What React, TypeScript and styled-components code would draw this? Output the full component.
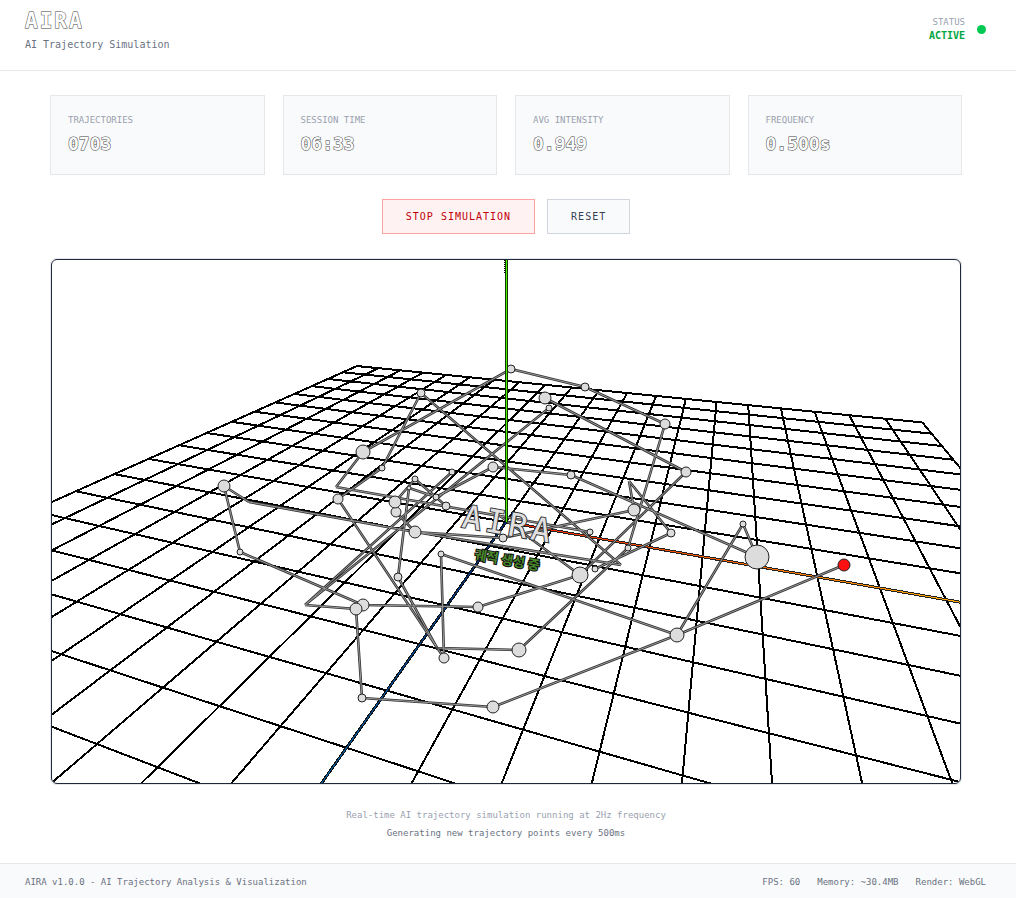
import React, { useState } from 'react';
import styled, { createGlobalStyle } from 'styled-components';

const mono = '"DejaVu Sans Mono", "Liberation Mono", monospace';

const GlobalStyle = createGlobalStyle`
  * { box-sizing: border-box; }
  body { margin: 0; background: #fff; font-family: ${mono}; font-size: 9px; }
  h1, p, dl, dt, dd { margin: 0; }
`;

const Page = styled.div`
  min-height: 100vh;
  display: flex;
  flex-direction: column;
`;

const Header = styled.header`
  display: flex;
  justify-content: space-between;
  align-items: flex-start;
  height: 71px;
  padding: 9px 30px 0 25px;
  border-bottom: 1px solid #e5e7eb;
`;

const Title = styled.h1`
  font-size: 21px;
  line-height: 24px;
  font-weight: 700;
  letter-spacing: 2px;
  color: #fff;
  -webkit-text-stroke: 1px #444;
  paint-order: stroke fill;
`;

const Subtitle = styled.p`
  margin-top: 5px;
  font-size: 10px;
  line-height: 14px;
  color: #6a7282;
`;

const Status = styled.div`
  display: flex;
  align-items: center;
  gap: 12px;
  margin-top: 7px;
`;

const StatusText = styled.div`
  text-align: right;
  line-height: 13px;
  color: #99a1af;
`;

const StatusValue = styled.div`
  font-size: 10px;
  line-height: 14px;
  font-weight: 700;
  color: #00a63e;
`;

const Dot = styled.span`
  width: 9px;
  height: 9px;
  border-radius: 50%;
  background: #00c951;
`;

const Main = styled.main`
  flex: 1;
  display: flex;
  flex-direction: column;
  gap: 24px;
  padding: 24px 54px 23px 50px;
`;

const Stats = styled.dl`
  display: grid;
  grid-template-columns: repeat(4, 1fr);
  gap: 18px;
`;

const Card = styled.div`
  height: 80px;
  padding: 18px 17px;
  background: #f9fafb;
  border: 1px solid #e5e7eb;
`;

const CardLabel = styled.dt`
  line-height: 13px;
  color: #99a1af;
`;

const CardValue = styled.dd`
  margin-top: 4px;
  font-size: 18px;
  line-height: 26px;
  font-weight: 700;
  color: #f9fafb;
  -webkit-text-stroke: 1px #444;
  paint-order: stroke fill;
`;

const Controls = styled.div`
  display: flex;
  justify-content: center;
  gap: 12px;
`;

const Button = styled.button<{ $danger?: boolean }>`
  height: 35px;
  padding: 0 23px;
  font: 400 10px ${mono};
  letter-spacing: 1px;
  cursor: pointer;
  color: ${(p) => (p.$danger ? '#c10007' : '#364153')};
  background: ${(p) => (p.$danger ? '#fef2f2' : '#f9fafb')};
  border: 1px solid ${(p) => (p.$danger ? '#ffa2a2' : '#d1d5dc')};
`;

const Viewport = styled.div`
  border: 1px solid #e5e7eb;
  border-radius: 6px;
`;

const Scene = styled.svg`
  display: block;
  width: 100%;
  height: 525px;
  border: 1px solid #1e2939;
  border-radius: 6px;
`;

const SceneTitle = styled.text`
  font: 400 32px ${mono};
  letter-spacing: 4px;
  fill: #e0e0e0;
  stroke: #333;
  stroke-width: 2px;
  paint-order: stroke;
`;

const SceneCaption = styled.text`
  font: 700 13px "Noto Sans CJK KR", sans-serif;
  fill: #4a8a2c;
  stroke: #111;
  stroke-width: 2px;
  paint-order: stroke;
`;

const Notes = styled.div`
  text-align: center;
  line-height: 13px;
  color: #99a1af;
`;

const Detail = styled.p`
  margin-top: 5px;
  color: #6a7282;
`;

const Footer = styled.footer`
  display: flex;
  justify-content: space-between;
  align-items: center;
  height: 35px;
  padding: 2px 30px 0 25px;
  background: #f9fafb;
  border-top: 1px solid #e5e7eb;
  color: #6a7282;
`;

const Metrics = styled.div`
  display: flex;
  gap: 17px;
`;

// Orbit camera: focal length in px, distance in grid cells, azimuth and elevation.
const FOCAL = 562;
const DISTANCE = 11.94;
const AZIMUTH = (19.45 * Math.PI) / 180;
const ELEVATION = Math.PI / 6;

type Point = [number, number];

// Projects a point of the ground plane; the canvas centre is the world origin.
function project(x: number, z: number): Point {
  const across = x * Math.cos(AZIMUTH) - z * Math.sin(AZIMUTH);
  const toward = x * Math.sin(AZIMUTH) + z * Math.cos(AZIMUTH);
  const depth = DISTANCE - toward * Math.cos(ELEVATION);
  return [(FOCAL * across) / depth, (FOCAL * toward * Math.sin(ELEVATION)) / depth];
}

const CELLS = Array.from({ length: 21 }, (_, i) => i - 10);

const segment = (a: Point, b: Point) => `M${a[0]} ${a[1]}L${b[0]} ${b[1]}`;

const gridPath = CELLS.filter((n) => n !== 0)
  .map((n) => segment(project(n, -10), project(n, 10)) + segment(project(-10, n), project(10, n)))
  .join('') +
  segment(project(0, -10), project(0, 0)) +
  segment(project(-10, 0), project(0, 0));

const X_END = project(10, 0);
const Z_END = project(0, 8);

// Trajectory points: x, y, radius.
const NODES: [number, number, number][] = [
  [511, 369, 4], [585, 387, 4], [549, 408, 3], [545, 398, 6], [421, 393, 4], [363, 452, 7],
  [665, 424, 5], [686, 472, 5], [382, 468, 3], [338, 499, 5], [452, 472, 3], [493, 467, 5],
  [571, 475, 4], [415, 479, 3], [409, 488, 2], [436, 497, 3], [446, 506, 4], [396, 512, 5],
  [395, 502, 6], [415, 532, 6], [503, 538, 4], [634, 510, 6], [671, 533, 4], [590, 532, 3],
  [628, 548, 3], [595, 569, 3], [580, 575, 8], [743, 524, 3], [757, 557, 12], [441, 554, 3],
  [398, 577, 4], [224, 486, 6], [240, 552, 3], [363, 605, 6], [356, 609, 6], [478, 607, 5],
  [444, 658, 5], [519, 650, 7], [362, 698, 4], [493, 707, 6], [677, 635, 7], [437, 648, 1],
];

const EDGES: [number, number, number, number][] = [
  [511, 369, 585, 387], [585, 387, 665, 424], [511, 369, 363, 452], [665, 424, 628, 548],
  [545, 398, 686, 472], [549, 408, 305, 605], [421, 393, 382, 468], [421, 393, 621, 565],
  [363, 452, 336, 487], [336, 487, 590, 532], [382, 468, 338, 499], [338, 499, 444, 658],
  [398, 577, 409, 488], [398, 577, 437, 648], [409, 488, 436, 497], [415, 479, 446, 506],
  [415, 479, 395, 502], [436, 497, 493, 467], [493, 467, 571, 475], [571, 475, 757, 557],
  [452, 472, 305, 605], [224, 486, 249, 502], [249, 502, 415, 532], [415, 532, 621, 565],
  [396, 512, 415, 532], [415, 532, 503, 538], [503, 538, 634, 510], [634, 510, 629, 481],
  [629, 481, 671, 533], [671, 533, 595, 569], [686, 472, 580, 575], [500, 516, 580, 575],
  [580, 575, 478, 607], [628, 548, 519, 650], [519, 650, 437, 648], [441, 554, 444, 658],
  [441, 554, 677, 635], [677, 635, 743, 524], [743, 524, 757, 557], [677, 635, 844, 565],
  [677, 635, 493, 707], [493, 707, 362, 698], [362, 698, 356, 609], [356, 609, 305, 605],
  [363, 605, 478, 607], [363, 605, 240, 552], [240, 552, 224, 486],
];

const edgePath = EDGES.map(([a, b, c, d]) => `M${a} ${b}L${c} ${d}`).join('');

function Trajectories() {
  return (
    <Scene viewBox="-454 -262 908 523" preserveAspectRatio="xMidYMid slice" role="img" aria-label="Trajectory view">
      <defs>
        <linearGradient id="x-axis" gradientUnits="userSpaceOnUse" x1="0" y1="0" x2="454" y2="79">
          <stop offset="0" stopColor="#ff2000" />
          <stop offset="1" stopColor="#ffaa00" />
        </linearGradient>
        <linearGradient id="z-axis" gradientUnits="userSpaceOnUse" x1="0" y1="0" x2="-184" y2="261">
          <stop offset="0" stopColor="#002a80" />
          <stop offset="1" stopColor="#0060a0" />
        </linearGradient>
      </defs>
      <g fill="none" shapeRendering="crispEdges">
        <path d={gridPath} stroke="#000" strokeWidth="2" />
        <path d={segment([0, 0], X_END)} stroke="#222" strokeWidth="3" />
        <path d={segment([0, 0], X_END)} stroke="url(#x-axis)" strokeWidth="1" />
        <path d={segment([0, 0], Z_END)} stroke="#111" strokeWidth="3" />
        <path d={segment([0, 0], Z_END)} stroke="url(#z-axis)" strokeWidth="1" />
      </g>
      <g transform="translate(-506 -522)">
        <g fill="none">
          <path d={edgePath} stroke="#333" strokeWidth="2.6" />
          <path d={edgePath} stroke="#999" strokeWidth="1" />
        </g>
        <SceneTitle transform="translate(461 527) rotate(10)">AIRA</SceneTitle>
        <SceneCaption transform="translate(474 559) rotate(10)">궤적 생성 중</SceneCaption>
        <g fill="#dcdcdc" stroke="#222" strokeWidth="1">
          {NODES.map(([x, y, r]) => (
            <circle key={`${x}-${y}`} cx={x} cy={y} r={r} />
          ))}
          <circle cx="844" cy="565" r="6" fill="#ff1010" />
        </g>
      </g>
      <g shapeRendering="crispEdges">
        <path d="M-1 -262V-248" stroke="#000" strokeDasharray="1 1" strokeWidth="2" />
        <rect x="-1" y="-262" width="3" height="262" fill="#123800" />
        <rect x="0" y="-262" width="1" height="262" fill="#4bf000" />
      </g>
    </Scene>
  );
}

const STATS = [
  ['TRAJECTORIES', '0703'],
  ['SESSION TIME', '06:33'],
  ['AVG INTENSITY', '0.949'],
  ['FREQUENCY', '0.500s'],
];

export default function App() {
  const [running, setRunning] = useState(true);

  return (
    <Page>
      <GlobalStyle />
      <Header>
        <div>
          <Title>AIRA</Title>
          <Subtitle>AI Trajectory Simulation</Subtitle>
        </div>
        <Status>
          <StatusText>
            STATUS
            <StatusValue>{running ? 'ACTIVE' : 'IDLE'}</StatusValue>
          </StatusText>
          <Dot />
        </Status>
      </Header>
      <Main>
        <Stats>
          {STATS.map(([label, value]) => (
            <Card key={label}>
              <CardLabel>{label}</CardLabel>
              <CardValue>{value}</CardValue>
            </Card>
          ))}
        </Stats>
        <Controls>
          <Button type="button" $danger={running} onClick={() => setRunning(!running)}>
            {running ? 'STOP SIMULATION' : 'START SIMULATION'}
          </Button>
          <Button type="button">RESET</Button>
        </Controls>
        <Viewport>
          <Trajectories />
        </Viewport>
        <Notes>
          <p>Real-time AI trajectory simulation running at 2Hz frequency</p>
          <Detail>Generating new trajectory points every 500ms</Detail>
        </Notes>
      </Main>
      <Footer>
        <span>AIRA v1.0.0 - AI Trajectory Analysis &amp; Visualization</span>
        <Metrics>
          <span>FPS: 60</span>
          <span>Memory: ~30.4MB</span>
          <span>Render: WebGL</span>
        </Metrics>
      </Footer>
    </Page>
  );
}
